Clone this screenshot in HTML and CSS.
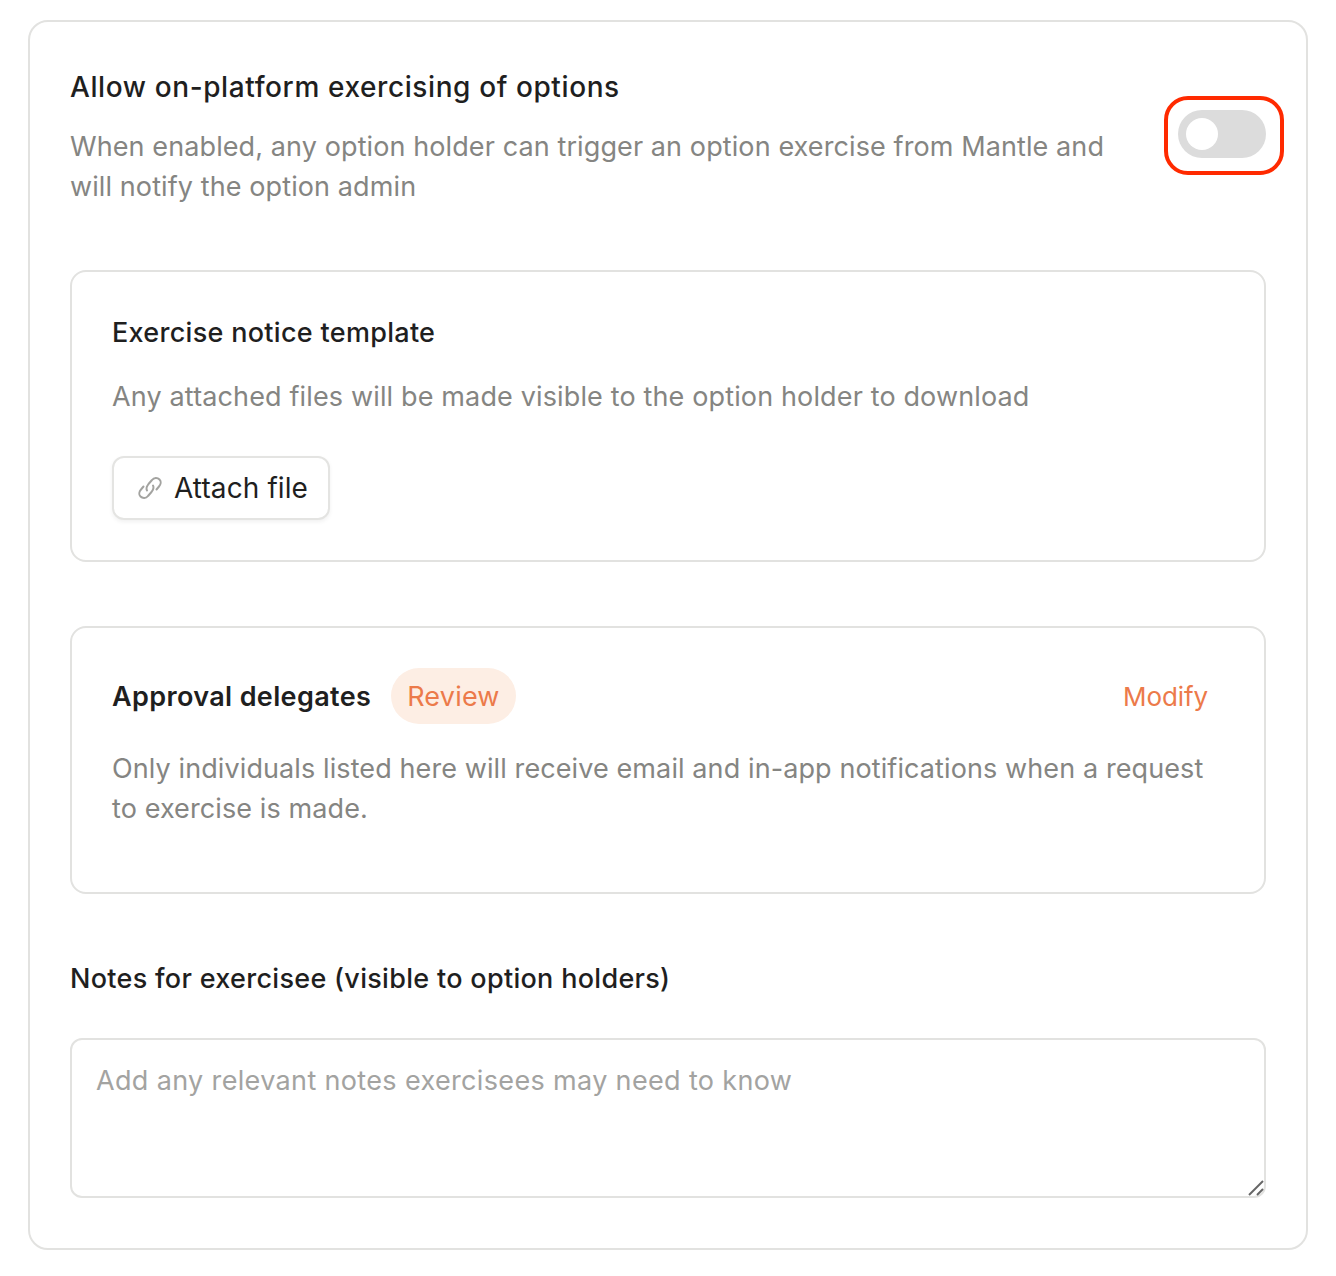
FILE: index.html
```html
<!DOCTYPE html>
<html lang="en">
<head>
    <meta charset="UTF-8">
    <meta name="viewport" content="width=device-width, initial-scale=1.0">
    <title>Option exercise settings</title>
    <link rel="stylesheet" href="styles.css">
</head>
<body>
    <div class="card">
        <div class="top-row">
            <div class="top-text">
                <h2 class="title">Allow on-platform exercising of options</h2>
                <p class="desc">When enabled, any option holder can trigger an option exercise from Mantle and will notify the option admin</p>
            </div>
            <div class="toggle"><span class="knob"></span></div>
        </div>

        <div class="panel panel-notice">
            <h3 class="panel-title">Exercise notice template</h3>
            <p class="desc panel-desc">Any attached files will be made visible to the option holder to download</p>
            <button class="attach-btn">
                <svg class="link-icon" viewBox="6 6 24 24" fill="none" stroke="#a3a3a0" stroke-width="2" stroke-linecap="round" stroke-linejoin="round">
                    <path d="M15 20.5C13.5 18 15 16 16.5 14L20 10C22 7.5 25.5 7.5 27.5 9.5C29.5 11.5 28.8 14.5 27 16.5L24.5 19.5"/>
                    <path d="M21 15.5C22.5 18 21 20 19.5 22L16 26C14 28.5 10.5 28.5 8.5 26.5C6.5 24.5 7.2 21.5 9 19.5L11.5 16.5"/>
                </svg>
                <span>Attach file</span>
            </button>
        </div>

        <div class="panel panel-delegates">
            <div class="delegates-head">
                <h3 class="panel-title strong">Approval delegates</h3>
                <span class="badge">Review</span>
                <a class="modify">Modify</a>
            </div>
            <p class="desc">Only individuals listed here will receive email and in-app notifications when a request to exercise is made.</p>
        </div>

        <h3 class="panel-title notes-label">Notes for exercisee (visible to option holders)</h3>
        <div class="notes-wrap">
            <textarea class="notes" placeholder="Add any relevant notes exercisees may need to know"></textarea>
            <svg class="grip" viewBox="0 0 16 16" fill="none" stroke="#666" stroke-width="2">
                <path d="M1 15 15 1"/>
                <path d="M9 15 15 9"/>
            </svg>
        </div>
    </div>
</body>
</html>
```

FILE: styles.css
```css
* {
    box-sizing: border-box;
}

body {
    margin: 0;
    padding: 20px 28px 26px;
    background-color: #ffffff;
    font-family: 'Inter', sans-serif;
    color: #1f1f1f;
}

h2, h3, p {
    margin: 0;
    font-weight: 500;
}

.card {
    border: 2px solid #e2e2e0;
    border-radius: 20px;
    padding: 46px 40px 50px;
    height: 1230px;
}

.top-row {
    display: flex;
    align-items: flex-start;
    justify-content: space-between;
}

.top-text {
    width: 1050px;
}

.title {
    font-size: 28px;
    line-height: 38px;
    letter-spacing: 0.6px;
}

.desc {
    font-size: 27px;
    line-height: 40px;
    font-weight: 400;
    letter-spacing: 0.1px;
    color: #858582;
    margin-top: 21px;
}

.toggle {
    position: relative;
    width: 88px;
    height: 48px;
    border-radius: 24px;
    background-color: #dcdcdc;
    padding: 8px;
    margin-top: 42px;
}

.toggle::after {
    content: "";
    position: absolute;
    top: -14px;
    left: -14px;
    right: -18px;
    bottom: -17px;
    border: 4px solid #ff2a00;
    border-radius: 24px;
}

.knob {
    display: block;
    width: 32px;
    height: 32px;
    border-radius: 50%;
    background-color: #ffffff;
}

.panel {
    border: 2px solid #e2e2e0;
    border-radius: 16px;
    padding: 0 40px;
}

.panel-notice {
    height: 292px;
    margin-top: 63px;
    padding-top: 43px;
}

.panel-title {
    font-size: 27px;
    line-height: 36px;
    letter-spacing: 0.3px;
}

.panel-desc {
    margin-top: 26px;
    letter-spacing: 0.14px;
}

.attach-btn {
    display: flex;
    align-items: center;
    gap: 12px;
    height: 64px;
    width: 218px;
    margin-top: 39px;
    padding: 0 24px;
    background-color: #ffffff;
    border: 2px solid #e4e4e2;
    border-radius: 12px;
    box-shadow: 0 2px 4px rgba(0, 0, 0, 0.06);
    font-family: 'Inter', sans-serif;
    font-size: 28px;
    letter-spacing: 0.1px;
    color: #1f1f1f;
    white-space: nowrap;
}

.link-icon {
    width: 24px;
    height: 24px;
    flex: none;
}

.panel-delegates {
    height: 268px;
    margin-top: 64px;
    padding-top: 40px;
    padding-right: 56px;
}

.delegates-head {
    display: flex;
    align-items: center;
    margin-bottom: 25px;
}

.strong {
    font-weight: 600;
    letter-spacing: 0.36px;
    padding-top: 2px;
}

.badge {
    margin-left: 20px;
    padding: 0 16px;
    height: 56px;
    line-height: 58px;
    border-radius: 28px;
    background-color: #fdeee4;
    color: #ec7a4a;
    font-size: 27px;
    letter-spacing: 0.2px;
}

.modify {
    margin-left: auto;
    color: #ec7a4a;
    font-size: 26px;
    font-weight: 400;
    letter-spacing: -0.1px;
}

.panel-delegates .desc {
    margin-top: 0;
    margin-right: -8px;
}

.notes-label {
    margin-top: 67px;
}

.notes-wrap {
    position: relative;
    margin-top: 41px;
    height: 160px;
}

.notes {
    display: block;
    width: 100%;
    height: 100%;
    padding: 21px 24px;
    border: 2px solid #e2e2e0;
    border-radius: 12px;
    resize: none;
    outline: none;
    font-family: 'Inter', sans-serif;
    font-size: 27px;
    line-height: 40px;
    letter-spacing: 0.35px;
}

.notes::placeholder {
    color: #a3a3a1;
}

.grip {
    position: absolute;
    right: 2px;
    bottom: 2px;
    width: 16px;
    height: 16px;
}
```
